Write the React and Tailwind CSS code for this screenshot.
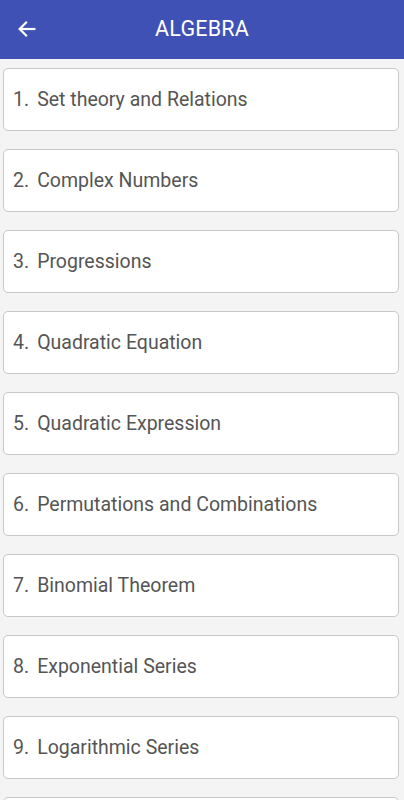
import React from "react";

const topics = [
  "Set theory and Relations",
  "Complex Numbers",
  "Progressions",
  "Quadratic Equation",
  "Quadratic Expression",
  "Permutations and Combinations",
  "Binomial Theorem",
  "Exponential Series",
  "Logarithmic Series",
  "Matrices and Determinants",
];

const App = () => {
  return (
    <div className="w-[404px] h-[800px] overflow-hidden bg-[#f4f4f4]" style={{ fontFamily: "Roboto, 'Liberation Sans', sans-serif" }}>
      <header className="h-[59px] bg-[#3f51b5] flex items-center relative">
        <button className="absolute left-[16px] top-[18px] text-white">
          <svg width="22" height="22" viewBox="0 0 24 24" fill="none" stroke="white" strokeWidth="2.4" strokeLinecap="square">
            <path d="M20 12H5" />
            <path d="M11 5l-7 7 7 7" />
          </svg>
        </button>
        <h1 className="flex-1 text-center text-white text-[21.5px] tracking-[0.2px]">ALGEBRA</h1>
      </header>
      <div className="flex flex-col gap-[18px] pt-[9px] pl-[3px] pr-[5px]">
        {topics.map((t, i) => (
          <div key={t} className="h-[63px] bg-white border border-[#c8c8c8] rounded-[5px] flex items-center pl-[9px] text-[19.5px] text-[#555555]">
            <span className="mr-[8px]">{i + 1}.</span>
            {t}
          </div>
        ))}
      </div>
    </div>
  );
};

export default App;
